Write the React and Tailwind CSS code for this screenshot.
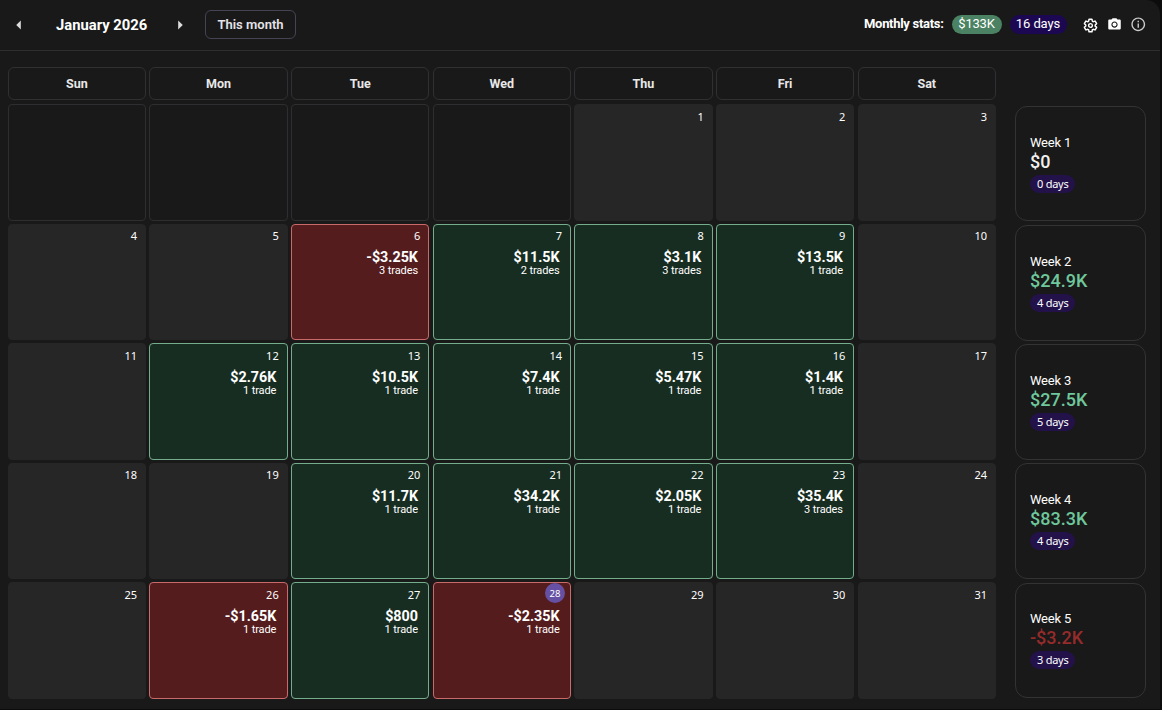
import { IoSettingsOutline } from 'react-icons/io5';
import { MdCameraAlt, MdArrowLeft, MdArrowRight, MdInfoOutline } from 'react-icons/md';

const weekdays = ['Sun', 'Mon', 'Tue', 'Wed', 'Thu', 'Fri', 'Sat'];

const trades = {
  6: { pnl: '-$3.25K', count: 3 },
  7: { pnl: '$11.5K', count: 2 },
  8: { pnl: '$3.1K', count: 3 },
  9: { pnl: '$13.5K', count: 1 },
  12: { pnl: '$2.76K', count: 1 },
  13: { pnl: '$10.5K', count: 1 },
  14: { pnl: '$7.4K', count: 1 },
  15: { pnl: '$5.47K', count: 1 },
  16: { pnl: '$1.4K', count: 1 },
  20: { pnl: '$11.7K', count: 1 },
  21: { pnl: '$34.2K', count: 1 },
  22: { pnl: '$2.05K', count: 1 },
  23: { pnl: '$35.4K', count: 3 },
  26: { pnl: '-$1.65K', count: 1 },
  27: { pnl: '$800', count: 1 },
  28: { pnl: '-$2.35K', count: 1 },
};

const weeks = [
  { name: 'Week 1', total: '$0', days: 0, color: 'text-[#f0f0f0]' },
  { name: 'Week 2', total: '$24.9K', days: 4, color: 'text-[#6fc79c]' },
  { name: 'Week 3', total: '$27.5K', days: 5, color: 'text-[#6fc79c]' },
  { name: 'Week 4', total: '$83.3K', days: 4, color: 'text-[#6fc79c]' },
  { name: 'Week 5', total: '-$3.2K', days: 3, color: 'text-[#962b2b]' },
];

const today = 28;
const firstWeekday = 4;

function DayCell({ day }) {
  if (day < 1) {
    return <div className="rounded-[4px] border border-[#2e2e30]" />;
  }

  const trade = trades[day];
  let colors = 'border-[#262626] bg-[#262626]';
  if (trade) {
    colors = trade.pnl.startsWith('-')
      ? 'border-[#c96a6a] bg-[#541c1d]'
      : 'border-[#74ad8c] bg-[#182d22]';
  }

  return (
    <div className={`flex flex-col items-end rounded-[4px] border ${colors}`}>
      {day === today ? (
        <span className="mr-[5px] flex h-5 w-5 items-center justify-center rounded-full bg-[#6650a4] pt-px font-['Noto_Sans',sans-serif] text-[9.5px] leading-5">
          {day}
        </span>
      ) : (
        <span className="mt-[2.7px] mr-[8px] h-[17.3px] font-['Noto_Sans',sans-serif] text-[11px] leading-[17px]">
          {day}
        </span>
      )}
      {trade && (
        <div className="mt-[4.5px] mr-[10.4px] text-right">
          <div className="text-[14.3px] leading-4 font-bold">{trade.pnl}</div>
          <div className="text-[11px] leading-[11px] tracking-[-0.1px]">
            {trade.count} {trade.count === 1 ? 'trade' : 'trades'}
          </div>
        </div>
      )}
    </div>
  );
}

export default function App() {
  const cells = Array.from({ length: 35 }, (_, i) => i - firstWeekday + 1);

  return (
    <div className="h-[710px] w-[1162px] bg-[#0c0c0c] pr-0.5 font-[Roboto,sans-serif] text-white">
      <div className="flex h-[709px] flex-col rounded-tr-[14px] bg-[#191919]">
        <header className="flex h-[51px] shrink-0 items-center justify-between border-b border-[#2e2e2e]">
          <div className="flex items-center">
            <MdArrowLeft className="ml-2 size-[22px] text-[#dddddd]" />
            <h1 className="mt-px ml-[26px] w-[91px] text-[14.8px] font-bold whitespace-nowrap">January 2026</h1>
            <MdArrowRight className="ml-[22px] size-[22px] text-[#dddddd]" />
            <button className="mb-0.5 ml-[14px] h-[29px] w-[91px] rounded-md border border-[#464354] pt-px text-[13px] font-semibold text-[#e6e3ea]">
              This month
            </button>
          </div>
          <div className="flex items-center pr-[14px]">
            <span className="mb-[3px] text-[13px] font-bold tracking-[-0.3px]">Monthly stats:</span>
            <span className="mb-0.5 ml-2 flex h-[19px] w-[50px] items-center justify-center rounded-full bg-[#4a8263] pb-px text-[13px] tracking-[-0.2px]">
              $133K
            </span>
            <span className="mb-0.5 ml-2 flex h-[19px] w-[57px] items-center justify-center rounded-full bg-[#1c0852] pb-px text-[13px] tracking-[-0.1px]">
              16 days
            </span>
            <IoSettingsOutline className="ml-4 size-[15px] [&_path]:stroke-[50]" />
            <MdCameraAlt className="mb-px ml-[9px] size-[15px]" />
            <MdInfoOutline className="mb-px ml-2 size-[16.5px] text-[#cccccc]" />
          </div>
        </header>

        <main className="flex pl-[7.7px]">
          <div className="w-[988.3px] pt-4">
            <div className="grid h-[33px] grid-cols-7 gap-x-[3.3px]">
              {weekdays.map((name) => (
                <div
                  key={name}
                  className="flex items-center justify-center rounded-md border border-[#303032] pt-px text-[12.5px] font-bold text-[#e8e8e8]"
                >
                  {name}
                </div>
              ))}
            </div>
            <div className="mt-1 grid h-[595px] grid-cols-7 grid-rows-5 gap-x-[3.3px] gap-y-[3px]">
              {cells.map((day) => (
                <DayCell key={day} day={day} />
              ))}
            </div>
          </div>

          <aside className="mt-[55px] ml-[19px] grid h-[592px] w-[131px] grid-rows-5 gap-[3.8px]">
            {weeks.map((week) => (
              <div
                key={week.name}
                className="flex flex-col items-start justify-center rounded-[12px] border border-[#333333] pl-3.5"
              >
                <div className="text-[13px] leading-4 tracking-[-0.2px]">{week.name}</div>
                <div className={`text-lg leading-[22px] font-medium ${week.color}`}>{week.total}</div>
                <div className="mt-0.5 flex h-[18px] items-center rounded-full bg-[#23124a] px-[7px] pt-[0.5px] font-['Noto_Sans',sans-serif] text-[11px] tracking-[-0.25px]">
                  {week.days} days
                </div>
              </div>
            ))}
          </aside>
        </main>
      </div>
    </div>
  );
}
